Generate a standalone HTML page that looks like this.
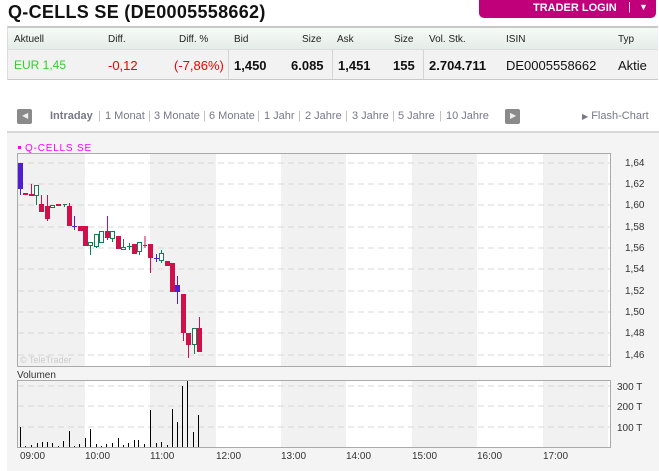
<!DOCTYPE html>
<html><head><meta charset="utf-8"><style>
*{margin:0;padding:0;box-sizing:border-box}
body{width:659px;height:471px;background:#fff;font-family:"Liberation Sans",Arial,sans-serif;position:relative;overflow:hidden}
.a{position:absolute;white-space:nowrap}
h1{position:absolute;left:8px;top:2px;font-size:18px;font-weight:bold;color:#111;letter-spacing:0.3px}
.btn{position:absolute;left:479px;top:0;width:177px;height:18px;background:#c0007a;border-radius:0 0 5px 5px;color:#fff;font-size:11px;font-weight:bold}
.tbl{position:absolute;left:7px;top:26px;width:651px;height:54px;border-top:2px solid #c8c8c8;border-bottom:1px solid #c8c8c8;border-left:1px solid #ddd}
.hd{position:absolute;left:0;top:0;width:100%;height:22px;background:linear-gradient(#f5faf7,#e5ede8);border-bottom:1px solid #ddd}
.rw{position:absolute;left:0;top:22px;width:100%;height:29px;background:#f2f2f2}
.h{font-size:10px;color:#222;top:6px}
.v{font-size:13px;color:#111;top:30px}
.b{font-weight:bold}
.sep{position:absolute;top:22px;width:1px;height:29px;background:#d4d4d4}
.nav{font-size:11px;color:#778;top:110px}
.nb{position:absolute;top:109px;width:15px;height:15px;background:#8a8a8a;border-radius:2px}
.ch{position:absolute;left:7px;top:131px;width:652px;height:340px;background:#f4f4f4;border-top:2px solid #d8d8d8}
</style></head><body>
<h1>Q-CELLS SE (DE0005558662)</h1>
<div class="btn"><span class="a" style="left:54px;top:2px">TRADER LOGIN</span><span class="a" style="left:149px;top:1px;font-weight:normal">|</span><span class="a" style="left:160px;top:2px;font-size:9px">▼</span></div>
<div class="tbl"><div class="hd"></div><div class="rw"></div>
<div class="sep" style="left:220px"></div><div class="sep" style="left:324px"></div><div class="sep" style="left:415px"></div>
<span class="a h" style="left:6px">Aktuell</span><span class="a h" style="left:100px">Diff.</span><span class="a h" style="left:171px">Diff. %</span>
<span class="a h" style="left:226px">Bid</span><span class="a h" style="left:294px">Size</span><span class="a h" style="left:329px">Ask</span>
<span class="a h" style="left:386px">Size</span><span class="a h" style="left:421px">Vol. Stk.</span><span class="a h" style="left:498px">ISIN</span><span class="a h" style="left:610px">Typ</span>
<span class="a v" style="left:6px;color:#3c3;font-size:12px">EUR 1,45</span><span class="a v" style="left:100px;color:#e00">-0,12</span><span class="a v" style="left:166px;color:#e00">(-7,86%)</span>
<span class="a v b" style="left:226px">1,450</span><span class="a v b" style="left:283px">6.085</span><span class="a v b" style="left:330px">1,451</span>
<span class="a v b" style="left:385px">155</span><span class="a v b" style="left:421px">2.704.711</span><span class="a v" style="left:498px">DE0005558662</span><span class="a v" style="left:610px">Aktie</span>
</div>
<div class="nb" style="left:17px"><span class="a" style="left:5px;top:2px;color:#eee;font-size:8px">◀</span></div>
<span class="a nav" style="left:50px;font-weight:bold">Intraday</span>
<span class="a nav" style="left:98px;color:#bbb">|</span><span class="a nav" style="left:105px">1 Monat</span>
<span class="a nav" style="left:148px;color:#bbb">|</span><span class="a nav" style="left:154px">3 Monate</span>
<span class="a nav" style="left:203px;color:#bbb">|</span><span class="a nav" style="left:209px">6 Monate</span>
<span class="a nav" style="left:257px;color:#bbb">|</span><span class="a nav" style="left:264px">1 Jahr</span>
<span class="a nav" style="left:298px;color:#bbb">|</span><span class="a nav" style="left:305px">2 Jahre</span>
<span class="a nav" style="left:345px;color:#bbb">|</span><span class="a nav" style="left:352px">3 Jahre</span>
<span class="a nav" style="left:392px;color:#bbb">|</span><span class="a nav" style="left:398px">5 Jahre</span>
<span class="a nav" style="left:439px;color:#bbb">|</span><span class="a nav" style="left:446px">10 Jahre</span>
<div class="nb" style="left:505px"><span class="a" style="left:5px;top:2px;color:#eee;font-size:8px">▶</span></div>
<span class="a nav" style="left:582px"><span style="font-size:8px">▶</span> Flash-Chart</span>
<div class="ch"></div>
<svg class="a" style="left:0;top:0" width="659" height="471" font-family="Liberation Sans, sans-serif">
<rect x="17" y="153" width="594" height="214" fill="#fff"/>
<g fill="#f1f1f1"><rect x="18" y="154" width="67" height="212"/><rect x="150" y="154" width="66" height="212"/><rect x="281" y="154" width="65" height="212"/><rect x="412" y="154" width="65" height="212"/><rect x="543" y="154" width="65" height="212"/></g>
<g stroke="#d8d8d8" stroke-dasharray="6,4"><line x1="18" x2="610" y1="163" y2="163"/><line x1="18" x2="610" y1="184" y2="184"/><line x1="18" x2="610" y1="205" y2="205"/><line x1="18" x2="610" y1="227" y2="227"/><line x1="18" x2="610" y1="248" y2="248"/><line x1="18" x2="610" y1="269" y2="269"/><line x1="18" x2="610" y1="291" y2="291"/><line x1="18" x2="610" y1="312" y2="312"/><line x1="18" x2="610" y1="333" y2="333"/><line x1="18" x2="610" y1="355" y2="355"/></g>
<rect x="17.5" y="153.5" width="593" height="213" fill="none" stroke="#aaa"/>
<rect x="18" y="146" width="3" height="3" fill="#f0f"/><text x="25" y="151" font-size="10" fill="#f0f" letter-spacing="0.8">Q-CELLS SE</text>
<text x="20" y="363" font-size="9" fill="#ccc">© TeleTrader</text>
<g font-size="10" fill="#333"><text x="625" y="166">1,64</text><text x="625" y="187">1,62</text><text x="625" y="208">1,60</text><text x="625" y="230">1,58</text><text x="625" y="251">1,56</text><text x="625" y="272">1,54</text><text x="625" y="294">1,52</text><text x="625" y="315">1,50</text><text x="625" y="336">1,48</text><text x="625" y="358">1,46</text></g>
<g stroke-width="1">
<line x1="20.5" y1="163" x2="20.5" y2="195" stroke="#5020d0"/><rect x="18" y="163" width="5" height="26" fill="#5020d0"/>
<g stroke="#d0104a"><line x1="31.5" y1="184" x2="31.5" y2="196"/><line x1="41.5" y1="195" x2="41.5" y2="212"/><line x1="47.5" y1="195" x2="47.5" y2="221"/><line x1="69.5" y1="203" x2="69.5" y2="226"/><line x1="107.5" y1="216" x2="107.5" y2="240"/><line x1="145" y1="236" x2="145" y2="248"/><line x1="150.5" y1="244" x2="150.5" y2="273"/><line x1="183.5" y1="294" x2="183.5" y2="341"/><line x1="188.5" y1="333" x2="188.5" y2="358"/><line x1="199.5" y1="317" x2="199.5" y2="352"/><line x1="172.5" y1="263" x2="172.5" y2="292"/></g>
<g fill="#d0104a"><rect x="23" y="193" width="5" height="2"/><rect x="29" y="194" width="5" height="2"/><rect x="39" y="204" width="5" height="8"/><rect x="45" y="206" width="5" height="13"/><rect x="56" y="204" width="5" height="2"/><rect x="67" y="206" width="5" height="20"/><rect x="78" y="226" width="5" height="5"/><rect x="83" y="226" width="5" height="20"/><rect x="105" y="231" width="5" height="7"/><rect x="116" y="236" width="5" height="13"/><rect x="132" y="244" width="5" height="10"/><rect x="143" y="245" width="4" height="1"/><rect x="148" y="244" width="5" height="14"/><rect x="165" y="261" width="5" height="5"/><rect x="170" y="263" width="5" height="29"/><rect x="181" y="294" width="5" height="39"/><rect x="186" y="333" width="5" height="12"/><rect x="197" y="328" width="5" height="24"/></g>
<g stroke="#5020d0"><line x1="74.5" y1="216" x2="74.5" y2="230"/><line x1="72" y1="226.5" x2="77" y2="226.5"/><line x1="156.5" y1="254" x2="156.5" y2="262"/><line x1="154" y1="258.5" x2="159" y2="258.5"/><line x1="177.5" y1="276" x2="177.5" y2="304"/></g>
<rect x="175" y="285" width="5" height="7" fill="#5020d0"/>
<g stroke="#108050" fill="#fff"><line x1="36.5" y1="185" x2="36.5" y2="205"/><rect x="34.5" y="185.5" width="4" height="10"/><line x1="63" y1="204.5" x2="67" y2="204.5"/><line x1="64.5" y1="204" x2="64.5" y2="207"/><rect x="50.5" y="205.5" width="4" height="2"/><line x1="90.5" y1="242" x2="90.5" y2="255"/><rect x="88.5" y="242.5" width="4" height="3"/><line x1="96.5" y1="234" x2="96.5" y2="248"/><rect x="94.5" y="234.5" width="4" height="12"/><rect x="99.5" y="231.5" width="4" height="11"/><rect x="110.5" y="231.5" width="4" height="7"/><line x1="112.5" y1="238" x2="112.5" y2="242"/><line x1="123.5" y1="239" x2="123.5" y2="249"/><rect x="121.5" y="247.5" width="4" height="2"/><line x1="127" y1="246.5" x2="132" y2="246.5"/><line x1="129.5" y1="243" x2="129.5" y2="250"/><line x1="139.5" y1="242" x2="139.5" y2="255"/><rect x="137.5" y="242.5" width="4" height="9"/><line x1="161.5" y1="250" x2="161.5" y2="263"/><rect x="159.5" y="253.5" width="4" height="7"/><line x1="194.5" y1="328" x2="194.5" y2="354"/><rect x="192.5" y="328.5" width="4" height="16"/></g>
</g>
<text x="17" y="378" font-size="10" fill="#333">Volumen</text>
<rect x="17" y="380" width="594" height="67" fill="#fff"/>
<g fill="#f1f1f1"><rect x="18" y="381" width="67" height="66"/><rect x="150" y="381" width="66" height="66"/><rect x="281" y="381" width="65" height="66"/><rect x="412" y="381" width="65" height="66"/><rect x="543" y="381" width="65" height="66"/></g>
<g stroke="#d8d8d8" stroke-dasharray="6,4"><line x1="18" x2="610" y1="386" y2="386"/><line x1="18" x2="610" y1="406" y2="406"/><line x1="18" x2="610" y1="427" y2="427"/></g>
<rect x="17.5" y="380.5" width="593" height="67" fill="none" stroke="#aaa"/>
<g font-size="10" fill="#333"><text x="617" y="390">300 T</text><text x="617" y="410">200 T</text><text x="617" y="431">100 T</text></g>
<path stroke="#000" shape-rendering="crispEdges" transform="translate(0.5,0)" d="M20 447V427M25 447V446M31 447V445M37 447V443M42 447V442M47 447V442M52 447V443M58 447V446M63 447V441M69 447V431M74 447V446M79 447V444M85 447V438M90 447V429M96 447V444M101 447V446M106 447V444M112 447V443M118 447V438M123 447V445M128 447V443M134 447V440M138 447V440M144 447V444M150 447V410M156 447V443M161 447V442M167 447V445M172 447V409M177 447V422M182 447V386M187 447V381M193 447V432M198 447V415"/>
<g font-size="10" fill="#333"><text x="20" y="459">09:00</text><text x="85" y="459">10:00</text><text x="150" y="459">11:00</text><text x="216" y="459">12:00</text><text x="281" y="459">13:00</text><text x="346" y="459">14:00</text><text x="412" y="459">15:00</text><text x="477" y="459">16:00</text><text x="543" y="459">17:00</text></g>
</svg>
</body></html>
